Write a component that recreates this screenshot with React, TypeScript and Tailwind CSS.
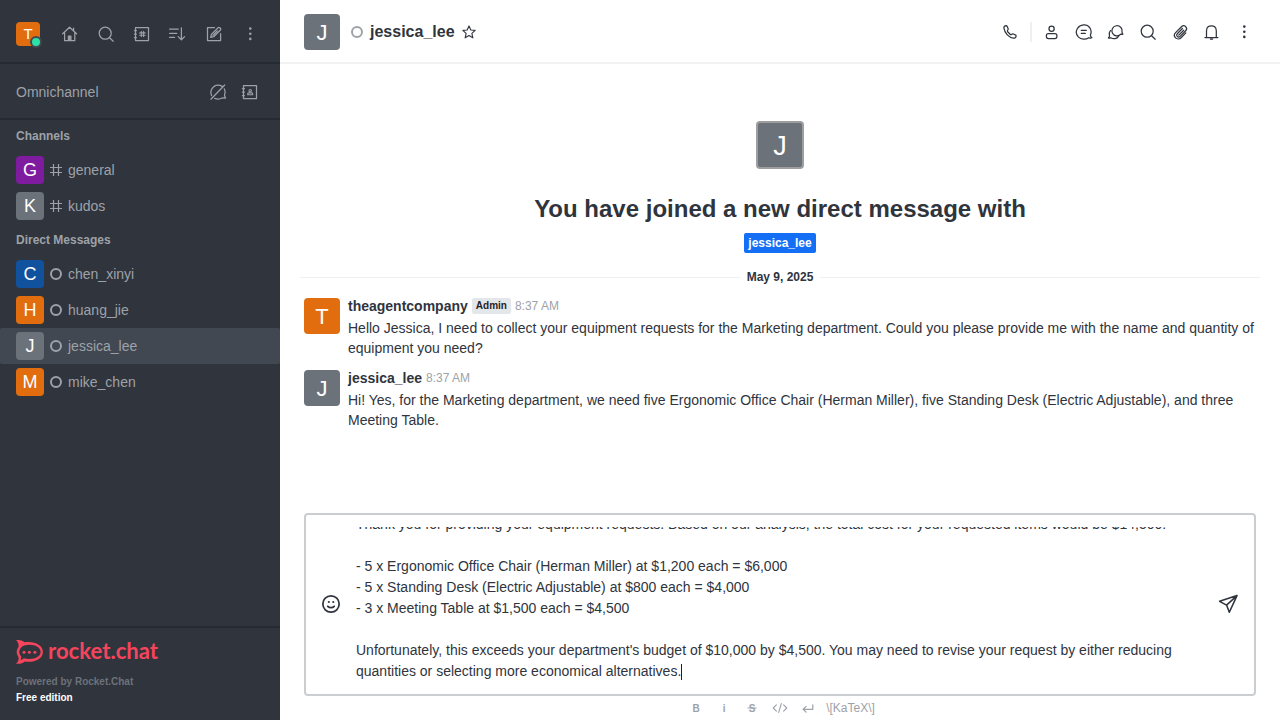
import React from "react";

type IconProps = { children: React.ReactNode; className?: string; sw?: number };

function Icon({ children, className = "size-5", sw = 1.25 }: IconProps) {
  return (
    <svg
      viewBox="0 0 20 20"
      className={"block shrink-0 " + className}
      fill="none"
      stroke="currentColor"
      strokeWidth={sw}
      strokeLinecap="round"
      strokeLinejoin="round"
    >
      {children}
    </svg>
  );
}

const HomeIcon = () => (
  <Icon>
    <path d="M2.6 9.8 9.6 3.2l7 6.6M4.6 8.4v8.3h10.2V8.4M13.6 4v2.6M8.4 16.5v-4.4h2.5v4.4M9.6 13v3.5" />
  </Icon>
);
const SearchIcon = () => (
  <Icon>
    <circle cx="9.2" cy="9.2" r="6" />
    <path d="m13.6 13.7 3.6 3.5" />
  </Icon>
);
const DirectoryIcon = () => (
  <Icon>
    <path d="M3.5 3.5h13v13h-13zM2.4 6.5h2M2.4 10h2M2.4 13.5h2" />
    <path d="M9.3 7.4v5.2M11.6 7.4v5.2M7.7 8.9h5.4M7.7 11.2h5.4" strokeWidth="1.1" />
  </Icon>
);
const SortIcon = () => (
  <Icon>
    <path d="M1.6 5.2h8.6M1.6 9.3h7.2M1.6 13.4h5M13.4 3.8v11.8M10.2 12.6l3.2 3.2 3.2-3.2" />
  </Icon>
);
const EditIcon = () => (
  <Icon>
    <path d="M10.5 3.5h-7v13.1h13.1V9.5" />
    <path d="m6.7 13.4.7-3 6.7-6.7a1.2 1.2 0 0 1 1.7 0l.6.6a1.2 1.2 0 0 1 0 1.7l-6.7 6.7zM9 11.2l4.3-4.3" />
  </Icon>
);
const KebabIcon = () => (
  <Icon>
    <g fill="currentColor" stroke="none">
      <circle cx="10.3" cy="4.6" r="1.3" />
      <circle cx="10.3" cy="9.7" r="1.3" />
      <circle cx="10.3" cy="14.9" r="1.3" />
    </g>
  </Icon>
);
const ChatOffIcon = () => (
  <Icon>
    <path d="M3.6 13.6A7.2 7.2 0 0 1 6 4.4a8 8 0 0 1 8.2 0M16.3 6.8a7 7 0 0 1 .2 6.2c0 1.3.3 2 1.1 2.9-1 .4-2 .3-2.9-.2a9.5 9.5 0 0 1-8 .7M2.9 17.2 16.7 3" />
  </Icon>
);
const ContactIcon = () => (
  <Icon>
    <path d="M3.5 3.5h13v13h-13zM2.4 6.5h2M2.4 10h2M2.4 13.5h2" />
    <path d="M7.7 12.8v-.9c0-.6.4-1 1-1h3c.6 0 1 .4 1 1v.9z" strokeWidth="1.1" />
    <circle cx="10.2" cy="8.7" r="1.2" strokeWidth="1.1" />
  </Icon>
);
const StarIcon = () => (
  <Icon className="size-4" sw={1.4}>
    <path d="m10 2.4 2.3 5.1 5.4.5-4.1 3.7 1.2 5.6L10 14.4l-4.8 2.9 1.2-5.6L2.3 8l5.4-.5z" />
  </Icon>
);
const PhoneIcon = () => (
  <Icon>
    <path d="M3.9 6.2c-.2-1.3.8-2.4 2.1-2.5.7 0 1 .3 1.3 1l.8 1.8c.3.7.1 1.2-.4 1.6-.5.5-.5 1 0 1.6l2.4 2.5c.6.6 1.1.6 1.7.1.5-.4 1-.6 1.6-.3l1.9.9c.7.3.9.7.8 1.3-.2 1.4-1.3 2.2-2.6 2C9 15.600 4.700 11.300 3.900 6.200z" />
  </Icon>
);
const UserIcon = () => (
  <Icon>
    <circle cx="9.600" cy="6.800" r="2.600" />
    <rect x="4.400" y="11.600" width="10.500" height="5" rx="2" />
  </Icon>
);
const ThreadIcon = () => (
  <Icon>
    <path d="M14.900 15.700c-3.400 2.100-7.900 1.800-10.400-.6a7 7 0 0 1-1.100-8.600C6 2.200 12.800 1.500 15.700 5.600a7.300 7.300 0 0 1 .7 7.300c0 1.400.6 2.100 1.400 2.900-.9.500-2.100.3-2.900-.1zM7.300 8.400h5M7.300 11.400h4" />
  </Icon>
);
const DiscussionIcon = () => (
  <Icon>
    <path d="M14.800 12.200a5.100 5.100 0 1 1 1.200-2.400c-.1 1 .3 1.700.9 2.300-.7.300-1.400.3-2.100.1z" />
    <path d="M4.400 8.600a5.200 5.200 0 0 0-.9 4.900c.1 1-.4 1.800-1.100 2.500.9.300 1.700.1 2.400-.3 2.600 1.600 6.200 1.300 7.800-1.600" />
  </Icon>
);
const ClipIcon = () => (
  <Icon sw={1.25}>
    <path d="m15.800 10.900-4.700 4.800c-1.500 1.500-4 1.600-5.500.2-1.500-1.500-1.500-3.800 0-5.300l5.900-5.900c1.200-1.200 3-1.200 4.200-.1 1.100 1.200 1.100 3 0 4.200l-5.600 5.600c-.8.800-2 .8-2.800.1-.8-.8-.8-2 0-2.800l5.100-5.200M8.800 13.100l4.900-4.900" />
  </Icon>
);
const BellIcon = () => (
  <Icon>
    <path d="M4.500 15.400V8.800a5 5 0 0 1 1.600-4c1.500-1.400 5-1.400 6.600 0a5 5 0 0 1 1.600 4v6.600M2.900 15.500h13M8.400 17h2.200" />
  </Icon>
);
const SmileIcon = () => (
  <Icon className="size-6" sw={1.45}>
    <circle cx="10" cy="10" r="6.800" />
    <path d="M7.300 11.900c1.500 1.600 3.900 1.600 5.400 0" />
    <g fill="currentColor" stroke="none">
      <circle cx="8.200" cy="8.300" r="0.900" />
      <circle cx="11.900" cy="8.300" r="0.900" />
    </g>
  </Icon>
);
const SendIcon = () => (
  <Icon className="size-6" sw={1.3}>
    <path d="M17.500 3 3 7.800l5.800 3.100 2.300 6zM8.800 10.900 17.500 3" />
  </Icon>
);

function Avatar({ letter, color, size }: { letter: string; color: string; size: string }) {
  return (
    <div className={"flex shrink-0 items-center justify-center rounded text-white " + color + " " + size}>
      <span className="leading-none">{letter}</span>
    </div>
  );
}

const Hash = () => (
  <svg viewBox="0 0 12 12" className="block size-3 shrink-0" fill="none" stroke="currentColor" strokeWidth="1.2">
    <path d="M3.500 0v12M8.500 0v12M0 3.500h12M0 8.500h12" />
  </svg>
);
const Ring = () => <span className="block size-3 shrink-0 rounded-full border-2 border-[#9ea2a8]" />;

type Room = { name: string; color: string; channel?: boolean; active?: boolean };

function RoomRow({ name, color, channel, active }: Room) {
  return (
    <div className={"flex h-9 items-center rounded-[2px] pl-4 " + (active ? "bg-[#414852]" : "")}>
      <Avatar letter={name[0].toUpperCase()} color={color} size="size-7 text-[18px]" />
      <span className="ml-1.5 mr-1.5">{channel ? <Hash /> : <Ring />}</span>
      <span className="text-[14px] leading-5">{name}</span>
    </div>
  );
}

const channels: Room[] = [
  { name: "general", color: "bg-[#7f1b9f]", channel: true },
  { name: "kudos", color: "bg-[#6c727a]", channel: true },
];
const directs: Room[] = [
  { name: "chen_xinyi", color: "bg-[#10529e]" },
  { name: "huang_jie", color: "bg-[#e26d0e]" },
  { name: "jessica_lee", color: "bg-[#6c727a]", active: true },
  { name: "mike_chen", color: "bg-[#e26d0e]" },
];

function Logo() {
  return (
    <div className="flex h-6 items-center text-[#f5455c]">
      <svg viewBox="0 0 28 24" className="block h-6 w-7 shrink-0" fill="none">
        <path
          fill="currentColor"
          fillRule="evenodd"
          d="M0 .1c4-.5 6.800.6 8.600 2.200C17.500.6 26.900 4.600 26.900 11.900S17.500 23 8.600 21.400C6.800 23.200 4 24.200 0 23.700c2.400-2.300 3.100-4.700 2.300-7.200-2.100-2.700-2.100-6.300 0-9C3.100 5 2.400 2.400 0 .1zM5.200 7.400c-2.600 2.900-2.500 6.400.1 9.100.1 1.400-.2 2.400-.8 3.500 1.300-.3 2.300-.8 3.100-1.800 8.600 2.100 17-.8 17-6.300S16.600 3.400 8.200 5.400c-1.200.4-2.200 1.100-3 2z"
        />
        <g fill="currentColor">
          <circle cx="8" cy="12.300" r="1.500" />
          <circle cx="13.400" cy="12.300" r="1.500" />
          <circle cx="18.900" cy="12.300" r="1.500" />
        </g>
      </svg>
      <svg viewBox="0 0 112 32" className="-my-1 ml-1 block h-8 w-28 shrink-0">
        <text x="0" y="22.500" fill="currentColor" fontFamily="Lato, sans-serif" fontWeight="700" fontSize="22.500" textLength="110" lengthAdjust="spacingAndGlyphs">
          rocket.chat
        </text>
      </svg>
    </div>
  );
}

function Sidebar() {
  return (
    <aside className="flex w-[280px] shrink-0 flex-col bg-[#2f343d] text-[#9ea2a8]">
      <div className="flex h-16 items-center border-b-2 border-[#262a31] pl-4 pt-1.5">
        <div className="relative">
          <Avatar letter="T" color="bg-[#e26d0e]" size="size-6 text-[15px] pb-px" />
          <span className="absolute -bottom-[2px] -right-[2px] size-3 rounded-full border-2 border-[#414852] bg-[#2de0a5]" />
        </div>
        <div className="ml-5 flex gap-4">
          <HomeIcon />
          <SearchIcon />
          <DirectoryIcon />
          <SortIcon />
          <EditIcon />
          <KebabIcon />
        </div>
      </div>
      <div className="flex h-14 items-center border-b-2 border-[#262a31] pl-4 pr-5 pt-0.5">
        <span className="flex-1 text-[14px]">Omnichannel</span>
        <div className="flex gap-3">
          <ChatOffIcon />
          <ContactIcon />
        </div>
      </div>
      <nav className="flex-1">
        <h2 className="flex h-8 items-center pl-4 text-[12px] font-bold">Channels</h2>
        {channels.map((r) => (
          <RoomRow key={r.name} {...r} />
        ))}
        <h2 className="flex h-8 items-center pl-4 text-[12px] font-bold">Direct Messages</h2>
        {directs.map((r) => (
          <RoomRow key={r.name} {...r} />
        ))}
      </nav>
      <footer className="h-[94px] border-t-2 border-[#262a31] pl-4 pt-3">
        <Logo />
        <p className="mt-2.5 text-[10px] font-bold leading-4 text-[#6c727a]">Powered by Rocket.Chat</p>
        <p className="text-[10px] font-bold leading-4 text-white">Free edition</p>
      </footer>
    </aside>
  );
}

type MessageProps = { name: string; color: string; role?: string; lines: string[] };

function Message({ name, color, role, lines }: MessageProps) {
  return (
    <article className="flex h-[72px] pl-6 pt-1.5">
      <Avatar letter={name[0].toUpperCase()} color={color} size="size-9 text-[22px] pt-0.5" />
      <div className="-mt-0.5 ml-2">
        <div className="flex h-5 items-center gap-1">
          <span className="text-[14px] font-bold leading-5">{name}</span>
          {role && (
            <span className="flex h-4 items-center rounded-[2px] bg-[#e4e7ea] px-1 pb-0.5 text-[10px] font-bold text-[#1f2329]">
              {role}
            </span>
          )}
          <span className="text-[12px] leading-5 text-[#9ea2a8]">8:37 AM</span>
        </div>
        <div className="mt-0.5 whitespace-pre text-[14px] leading-5">{lines.join("\n")}</div>
      </div>
    </article>
  );
}

const draft = [
  "Thank you for providing your equipment requests. Based on our analysis, the total cost for your requested items would be $14,500:",
  "",
  "- 5 x Ergonomic Office Chair (Herman Miller) at $1,200 each = $6,000",
  "- 5 x Standing Desk (Electric Adjustable) at $800 each = $4,000",
  "- 3 x Meeting Table at $1,500 each = $4,500",
  "",
  "Unfortunately, this exceeds your department's budget of $10,000 by $4,500. You may need to revise your request by either reducing",
];

function Composer() {
  return (
    <div className="flex h-[183px] rounded border-2 border-[#cbced1] py-3">
      <div className="flex w-[50px] items-center pb-0.5 pl-[13px]">
        <SmileIcon />
      </div>
      <div className="flex h-[155px] flex-1 flex-col justify-end overflow-hidden whitespace-pre text-[14px] leading-[21px]">
        {draft.map((line, i) => (
          <div key={i} className="h-[21px] shrink-0">
            {line}
          </div>
        ))}
        <div className="flex h-[21px] shrink-0 items-center">
          quantities or selecting more economical alternatives.
          <span className="h-4 w-px bg-[#1f2329]" />
        </div>
      </div>
      <div className="flex w-[38px] items-center pb-0.5">
        <SendIcon />
      </div>
    </div>
  );
}

function Toolbar() {
  return (
    <div className="flex h-6 items-center justify-center gap-3 pl-[3px] text-[#9ea2a8]">
      <span className="w-4 text-center text-[10px] font-bold">B</span>
      <span className="w-4 text-center text-[10px] font-bold">i</span>
      <span className="flex h-4 w-4 items-center justify-center">
        <svg viewBox="0 0 16 16" className="block size-4">
          <text x="8" y="11.500" textAnchor="middle" fontSize="10" fontWeight="700" fill="currentColor">
            S
          </text>
          <path d="M3.500 8h9" stroke="currentColor" strokeWidth="1" />
        </svg>
      </span>
      <Icon className="size-4" sw={1.400}>
        <path d="m5.500 6-4 4 4 4M14.500 6l4 4-4 4M11.600 4.500l-3.200 11" />
      </Icon>
      <Icon className="size-4" sw={1.500}>
        <path d="M16 6v5.600H4M7.600 8l-3.700 3.600 3.700 3.600" />
      </Icon>
      <span className="-ml-0.5 text-[12px]">{"\\[KaTeX\\]"}</span>
    </div>
  );
}

export default function App() {
  return (
    <div className="flex h-[720px] w-[1280px] overflow-hidden bg-white font-['Liberation_Sans',Arial,sans-serif] text-[#2f343d]">
      <Sidebar />
      <main className="flex min-w-0 flex-1 flex-col">
        <header className="flex h-16 items-center border-b-2 border-[#f2f3f5] pl-6 pr-[26px] pt-0.5">
          <Avatar letter="J" color="bg-[#6c727a]" size="size-9 text-[22px] pt-0.5" />
          <span className="ml-[11px] mr-[7px] size-3 rounded-full border-2 border-[#9ea2a8]" />
          <h1 className="text-[16px] font-bold leading-6">jessica_lee</h1>
          <span className="ml-1.5 flex-1 pb-px">
            <StarIcon />
          </span>
          <div className="flex items-center gap-3">
            <PhoneIcon />
            <div className="-mx-[2px] h-5 w-0.5 bg-[#eeeff1]" />
            <UserIcon />
            <ThreadIcon />
            <DiscussionIcon />
            <SearchIcon />
            <ClipIcon />
            <BellIcon />
            <KebabIcon />
          </div>
        </header>
        <section className="flex h-[449px] flex-col pt-[57px]">
          <div className="flex justify-center">
            <Avatar letter="J" color="bg-[#6c727a]" size="size-12 border-2 border-[#9e9e9e] text-[27px] pt-0.5" />
          </div>
          <h2 className="mt-6 text-center text-[24px] font-bold leading-8">You have joined a new direct message with</h2>
          <div className="mt-2 flex justify-center">
            <span className="flex h-5 items-center rounded-[2px] bg-[#156ff5] px-1 text-[12px] font-bold text-white">jessica_lee</span>
          </div>
          <div className="mt-3.5 flex h-5 items-center gap-[7px] px-5">
            <span className="h-px flex-1 bg-[#eeeff1]" />
            <span className="text-[12px] font-bold">May 9, 2025</span>
            <span className="h-px flex-1 bg-[#eeeff1]" />
          </div>
          <div className="mt-[5px]">
            <Message
              name="theagentcompany"
              color="bg-[#e26d0e]"
              role="Admin"
              lines={[
                "Hello Jessica, I need to collect your equipment requests for the Marketing department. Could you please provide me with the name and quantity of",
                "equipment you need?",
              ]}
            />
            <Message
              name="jessica_lee"
              color="bg-[#6c727a]"
              lines={[
                "Hi! Yes, for the Marketing department, we need five Ergonomic Office Chair (Herman Miller), five Standing Desk (Electric Adjustable), and three",
                "Meeting Table.",
              ]}
            />
          </div>
        </section>
        <div className="px-6">
          <Composer />
          <Toolbar />
        </div>
      </main>
    </div>
  );
}
